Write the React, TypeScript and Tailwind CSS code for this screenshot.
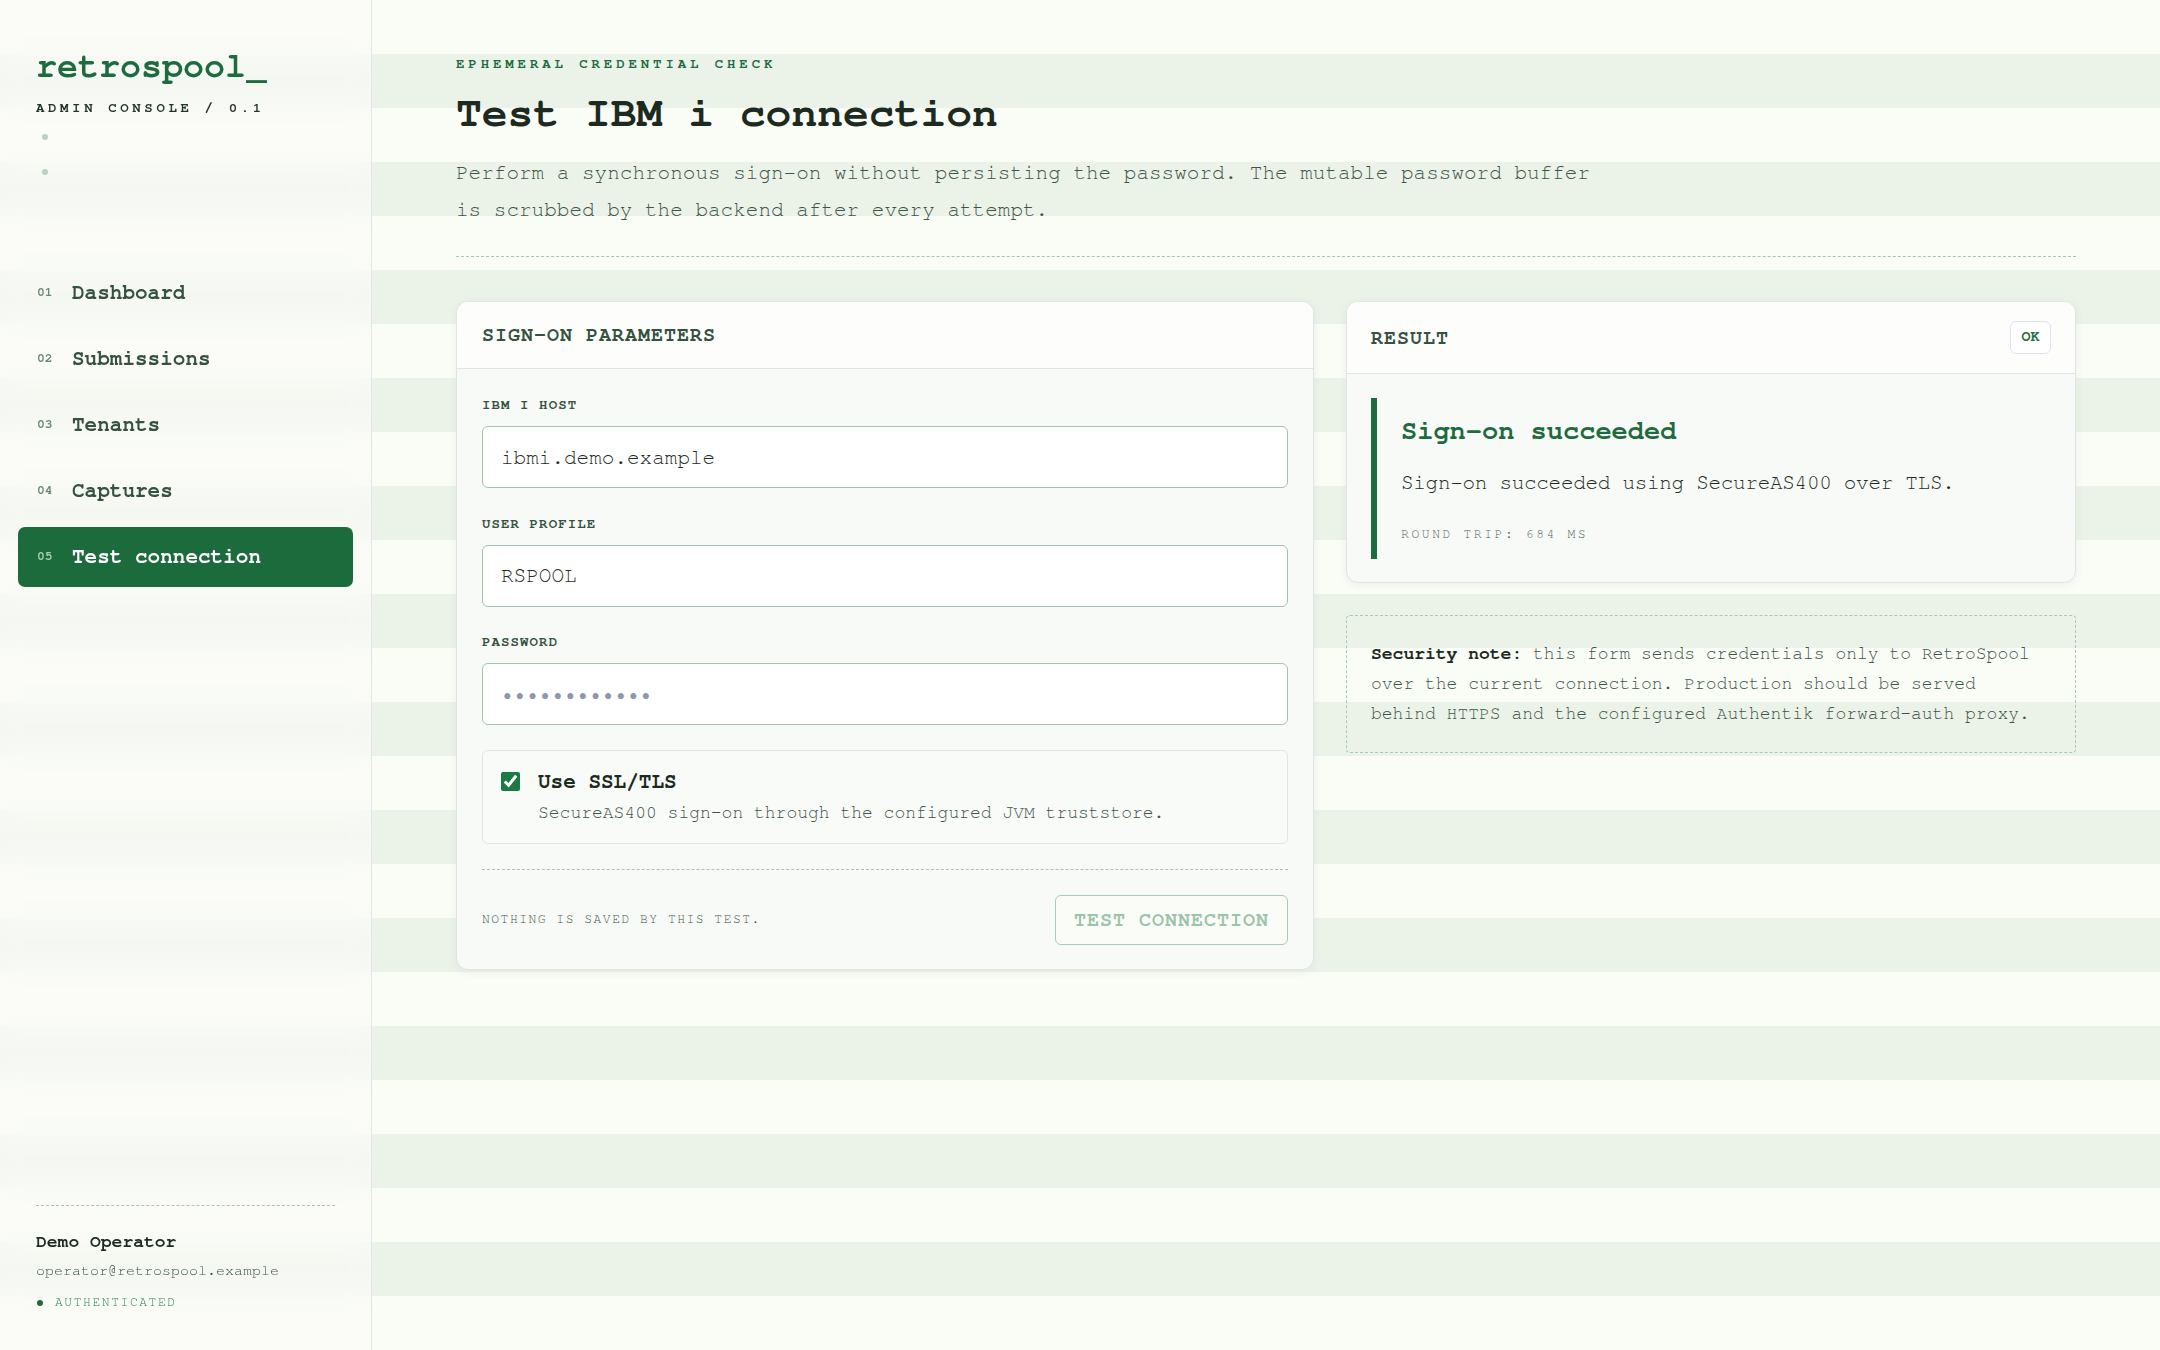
const mono = "font-['Nimbus_Mono_PS','Nimbus_Mono_L','FreeMono','Courier_10_Pitch','Liberation_Mono',monospace]"

const navItems = [
  { num: '01', label: 'Dashboard' },
  { num: '02', label: 'Submissions' },
  { num: '03', label: 'Tenants' },
  { num: '04', label: 'Captures' },
  { num: '05', label: 'Test connection', active: true },
]

function Sidebar() {
  return (
    <aside className="w-[372px] shrink-0 h-[1350px] flex flex-col border-r border-[#e2e6e4] bg-[#fbfcf8]/60 backdrop-blur-[14px]">
      <div className="pt-[45px] px-[36px]">
        <div className="text-[35px] leading-[44px] font-bold text-[#1d6b3e]">retrospool_</div>
        <div className="mt-[11px] text-[14px] leading-[16px] font-bold tracking-[0.26em] text-[#24342a]">
          ADMIN CONSOLE / 0.1
        </div>
        <div className="mt-[18px] ml-[6px] flex flex-col gap-[29px]">
          <span className="block w-[6px] h-[6px] rounded-full bg-[#b9d2c1]" />
          <span className="block w-[6px] h-[6px] rounded-full bg-[#b9d2c1]" />
        </div>
      </div>

      <nav className="mt-[88px] px-[18px] flex flex-col gap-[6px]">
        {navItems.map((item) => (
          <a
            key={item.num}
            className={`flex items-center h-[60px] pl-[19px] rounded-[7px] ${
              item.active ? 'bg-[#1c6b3d] text-white' : 'text-[#35513f]'
            }`}
          >
            <span
              className={`w-[35px] text-[13px] font-bold ${item.active ? 'text-[#a9cfb5]' : 'text-[#6a8573]'}`}
            >
              {item.num}
            </span>
            <span className="text-[21px] font-bold">{item.label}</span>
          </a>
        ))}
      </nav>

      <div className="mt-auto px-[36px] pb-[39px]">
        <div className="border-t border-dashed border-[#a9c6b2]" />
        <div className="mt-[24px] text-[18px] leading-[24px] font-bold text-[#1c2a21]">Demo Operator</div>
        <div className="mt-[7px] text-[15px] leading-[20px] text-[#3d5446]">operator@retrospool.example</div>
        <div className="mt-[14px] flex items-center gap-[12px] text-[13px] leading-[16px] tracking-[0.12em] text-[#2f8053]">
          <span className="block w-[6px] h-[6px] ml-[1px] rounded-full bg-[#1d6b3e]" />
          AUTHENTICATED
        </div>
      </div>
    </aside>
  )
}

function Field({ label, value, password }: { label: string; value?: string; password?: boolean }) {
  return (
    <div>
      <div className="text-[14px] leading-[18px] font-bold tracking-[0.08em] text-[#35513f]">{label}</div>
      <input
        type={password ? 'password' : 'text'}
        defaultValue={value}
        placeholder={password ? '••••••••••••' : undefined}
        className={`mt-[12px] block w-full h-[62px] px-[18px] rounded-[6px] border-[1.5px] border-[#a3c4ac] bg-white text-[21px] text-[#1f2d24] placeholder:text-[#8f96a8] outline-none ${mono}`}
      />
    </div>
  )
}

function SignOnCard() {
  return (
    <section className="rounded-[12px] border border-[#e0e4e4] bg-[#f8faf7] shadow-[0_2px_8px_rgba(40,70,50,0.06)] overflow-hidden">
      <div className="h-[67px] px-[25px] flex items-center border-b border-[#e0e3ea] bg-[#fdfefc]">
        <h2 className="text-[20px] font-bold tracking-[0.05em] text-[#35513f]">SIGN-ON PARAMETERS</h2>
      </div>
      <div className="px-[25px] pt-[27px] pb-[24px]">
        <div className="flex flex-col gap-[26.5px]">
          <Field label="IBM I HOST" value="ibmi.demo.example" />
          <Field label="USER PROFILE" value="RSPOOL" />
          <Field label="PASSWORD" password />
        </div>

        <label className="mt-[25px] flex items-start px-[18px] py-[18px] rounded-[6px] border border-[#e1e5e6] bg-[#f9fbf8]">
          <input type="checkbox" defaultChecked className="mt-[3px] w-[19px] h-[19px] shrink-0 accent-[#1d7a45]" />
          <div className="ml-[18px]">
            <div className="text-[21px] leading-[26px] font-bold text-[#1c2a21]">Use SSL/TLS</div>
            <div className="mt-[6px] text-[18px] leading-[24px] text-[#3d5446]">
              SecureAS400 sign-on through the configured JVM truststore.
            </div>
          </div>
        </label>

        <div className="mt-[25px] pt-[25px] border-t border-dashed border-[#a9c6b2] flex items-center justify-between">
          <span className="text-[13px] tracking-[0.115em] text-[#3d5446]">NOTHING IS SAVED BY THIS TEST.</span>
          <button
            disabled
            className={`h-[50px] px-[18px] rounded-[6px] border-[1.5px] border-[#a9cbb3] bg-[#fafcf8] text-[20px] font-bold tracking-[0.05em] text-[#9cc4a8] ${mono}`}
          >
            TEST CONNECTION
          </button>
        </div>
      </div>
    </section>
  )
}

function ResultCard() {
  return (
    <section className="rounded-[12px] border border-[#e0e4e4] bg-[#f8faf7] shadow-[0_2px_8px_rgba(40,70,50,0.06)] overflow-hidden">
      <div className="h-[72px] px-[24px] flex items-center justify-between border-b border-[#e0e3ea] bg-[#fdfefc]">
        <h2 className="text-[20px] font-bold tracking-[0.05em] text-[#35513f]">RESULT</h2>
        <span className="w-[41px] h-[33px] flex items-center justify-center rounded-[6px] border border-[#e0e3ea] bg-white text-[15px] font-bold text-[#1d6b3e]">
          OK
        </span>
      </div>
      <div className="px-[24px] pt-[24px] pb-[23px]">
        <div className="border-l-[6px] border-[#1d6b3e] pl-[24px] pt-[16px] pb-[15px]">
          <div className="text-[27px] leading-[34px] font-bold text-[#1d6b3e]">Sign-on succeeded</div>
          <div className="mt-[21px] text-[21px] tracking-[-0.3px] leading-[28px] text-[#1f2d24]">
            Sign-on succeeded using SecureAS400 over TLS.
          </div>
          <div className="mt-[29px] text-[13px] leading-[18px] tracking-[0.2em] text-[#4f6456]">ROUND TRIP: 684 MS</div>
        </div>
      </div>
    </section>
  )
}

export default function App() {
  return (
    <div
      className={`flex min-h-[1350px] ${mono} bg-[repeating-linear-gradient(180deg,#fafcf6_0px,#fafcf6_54px,#ebf3e8_54px,#ebf3e8_108px)]`}
    >
      <Sidebar />
      <main className="flex-1 min-w-0 px-[84px] pt-[56px]">
        <header className="pb-[28px] border-b border-dashed border-[#a9c6b2]">
          <div className="text-[14px] leading-[16px] font-bold tracking-[0.28em] text-[#1d6b3e]">
            EPHEMERAL CREDENTIAL CHECK
          </div>
          <h1 className="mt-[16px] text-[43px] leading-[52px] font-bold text-[#1c2a21]">Test IBM i connection</h1>
          <p className="mt-[14px] max-w-[1150px] text-[21px] leading-[37px] text-[#3d5446]">
            Perform a synchronous sign-on without persisting the password. The mutable password buffer is scrubbed by
            the backend after every attempt.
          </p>
        </header>

        <div className="mt-[44px] grid grid-cols-[858px_730px] gap-[32px] items-start">
          <SignOnCard />
          <div className="flex flex-col gap-[32px]">
            <ResultCard />
            <div className="px-[24px] py-[23px] rounded-[4px] border border-dashed border-[#a9c9b2] text-[18px] leading-[30px] text-[#3d5446]">
              <b className="text-[#1c2a21]">Security note:</b> this form sends credentials only to RetroSpool over the
              current connection. Production should be served behind HTTPS and the configured Authentik forward-auth
              proxy.
            </div>
          </div>
        </div>
      </main>
    </div>
  )
}
